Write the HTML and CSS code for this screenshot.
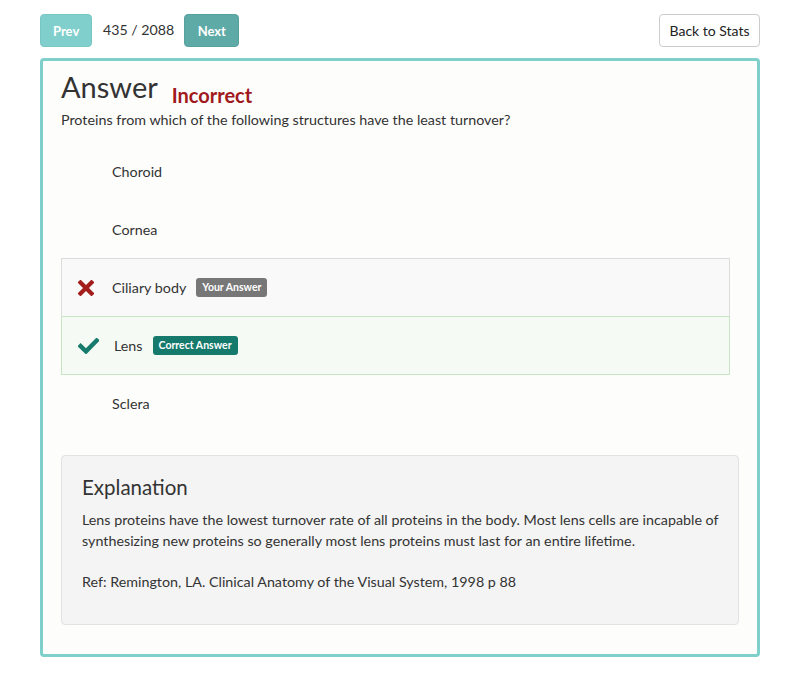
FILE: index.html
```html
<!DOCTYPE html>
<html lang="en">
<head>
<meta charset="utf-8">
<title>Answer</title>
<link rel="stylesheet" href="styles.css">
</head>
<body>
<div class="page">
  <div class="toolbar">
    <div class="pager">
      <button class="btn btn-prev">Prev</button>
      <span class="count">435 / 2088</span>
      <button class="btn btn-next">Next</button>
    </div>
    <button class="btn btn-back">Back to Stats</button>
  </div>

  <div class="card">
    <div class="title-row">
      <h1 class="title">Answer</h1>
      <span class="status">Incorrect</span>
    </div>
    <p class="question">Proteins from which of the following structures have the least turnover?</p>

    <ul class="options">
      <li class="option"><span class="icon"></span><span class="text">Choroid</span></li>
      <li class="option"><span class="icon"></span><span class="text">Cornea</span></li>
      <li class="option option-wrong">
        <span class="icon icon-x"><svg width="16" height="16" viewBox="0 0 16 16"><path d="M2.5 2.5 L13.5 13.5 M13.5 2.5 L2.5 13.5" stroke="#a31d1d" stroke-width="4.2" stroke-linecap="square" fill="none"/></svg></span>
        <span class="text">Ciliary body</span>
        <span class="badge badge-grey">Your Answer</span>
      </li>
      <li class="option option-right">
        <span class="icon icon-ok"><svg width="21" height="16" viewBox="0 0 21 16"><path d="M2.6 8.2 L8 13.4 L18.6 2.6" stroke="#167a6c" stroke-width="4.4" stroke-linecap="square" stroke-linejoin="miter" fill="none"/></svg></span>
        <span class="text">Lens</span>
        <span class="badge badge-green">Correct Answer</span>
      </li>
      <li class="option"><span class="icon"></span><span class="text">Sclera</span></li>
    </ul>

    <div class="explanation">
      <h3 class="exp-title">Explanation</h3>
      <p class="exp-text">Lens proteins have the lowest turnover rate of all proteins in the body. Most lens cells are incapable of synthesizing new proteins so generally most lens proteins must last for an entire lifetime.</p>
      <p class="exp-text">Ref: Remington, LA. Clinical Anatomy of the Visual System, 1998 p 88</p>
    </div>
  </div>
</div>
</body>
</html>
```

FILE: styles.css
```css
* { box-sizing: border-box; }

html, body {
  margin: 0;
  padding: 0;
  background: #ffffff;
}

body {
  font-family: Lato, "Liberation Sans", sans-serif;
  color: #333333;
  font-size: 14.3px;
}

.page {
  padding: 14px 40px 0 40px;
}

.toolbar {
  display: flex;
  justify-content: space-between;
  align-items: center;
  height: 33px;
}

.pager {
  display: flex;
  align-items: center;
}

.btn {
  font-family: Lato, "Liberation Sans", sans-serif;
  height: 33px;
  border-radius: 4px;
  border: 1px solid transparent;
  padding: 0 12px;
  font-size: 13px;
  cursor: pointer;
}

.btn-prev {
  width: 52px;
  background: #80cfcc;
  border-color: #78c7c3;
  color: #ffffff;
  font-weight: bold;
}

.btn-next {
  width: 55px;
  background: #5eaaa6;
  border-color: #58a29e;
  color: #ffffff;
  font-weight: bold;
}

.count {
  font-size: 14.2px;
  color: #333333;
  margin: 0 10px 0 11px;
  position: relative;
  top: -1px;
}

.btn-back {
  width: 101px;
  background: #ffffff;
  border-color: #cccccc;
  color: #222222;
  font-size: 14px;
  padding: 0;
}

.card {
  margin-top: 11px;
  border: 3px solid #7fcfcb;
  border-radius: 4px;
  background: #fdfdfb;
  padding: 9px 18px 29px 18px;
}

.title-row {
  display: flex;
  align-items: flex-start;
}

.title {
  margin: 0;
  font-size: 29px;
  font-weight: normal;
  line-height: 33px;
  color: #333333;
}

.status {
  margin-left: 14px;
  margin-top: 14px;
  font-size: 20px;
  line-height: 22px;
  font-weight: bold;
  color: #a0191c;
}

.question {
  margin: 4px 0 0 0;
  font-size: 14.3px;
  line-height: 20px;
  color: #333333;
}

.options {
  list-style: none;
  margin: 12px 9px 0 0;
  padding: 0;
}

.option {
  display: flex;
  align-items: center;
  height: 59px;
  border: 1px solid transparent;
  margin-bottom: -1px;
  padding-left: 16px;
  font-size: 14.3px;
  color: #333333;
}

.option-wrong {
  background: #f9f9fa;
  border-color: #dcdcdc;
}

.option-right {
  background: #f5fbf4;
  border-color: #c8e5c3;
  position: relative;
}

.icon {
  width: 34px;
  display: flex;
  align-items: center;
  flex: none;
}

.icon-ok {
  width: 36px;
}

.icon svg { display: block; }

.badge {
  display: inline-block;
  margin-left: 10px;
  color: #ffffff;
  font-weight: bold;
  font-size: 10.5px;
  line-height: 19px;
  height: 19px;
  padding: 0 6px;
  border-radius: 3px;
}

.badge-grey { background: #777777; }
.badge-green { background: #157a6b; }

.explanation {
  margin-top: 23px;
  background: #f4f4f4;
  border: 1px solid #e2e2e2;
  border-radius: 4px;
  padding: 18px 12px 17px 20px;
}

.exp-title {
  margin: 0 0 9px 0;
  font-size: 20.5px;
  font-weight: normal;
  line-height: 26px;
  color: #333333;
}

.exp-text {
  margin: 0 0 15px 0;
  font-size: 14.3px;
  line-height: 21px;
  color: #333333;
}

.exp-text + .exp-text { margin-top: 20px; }
```
